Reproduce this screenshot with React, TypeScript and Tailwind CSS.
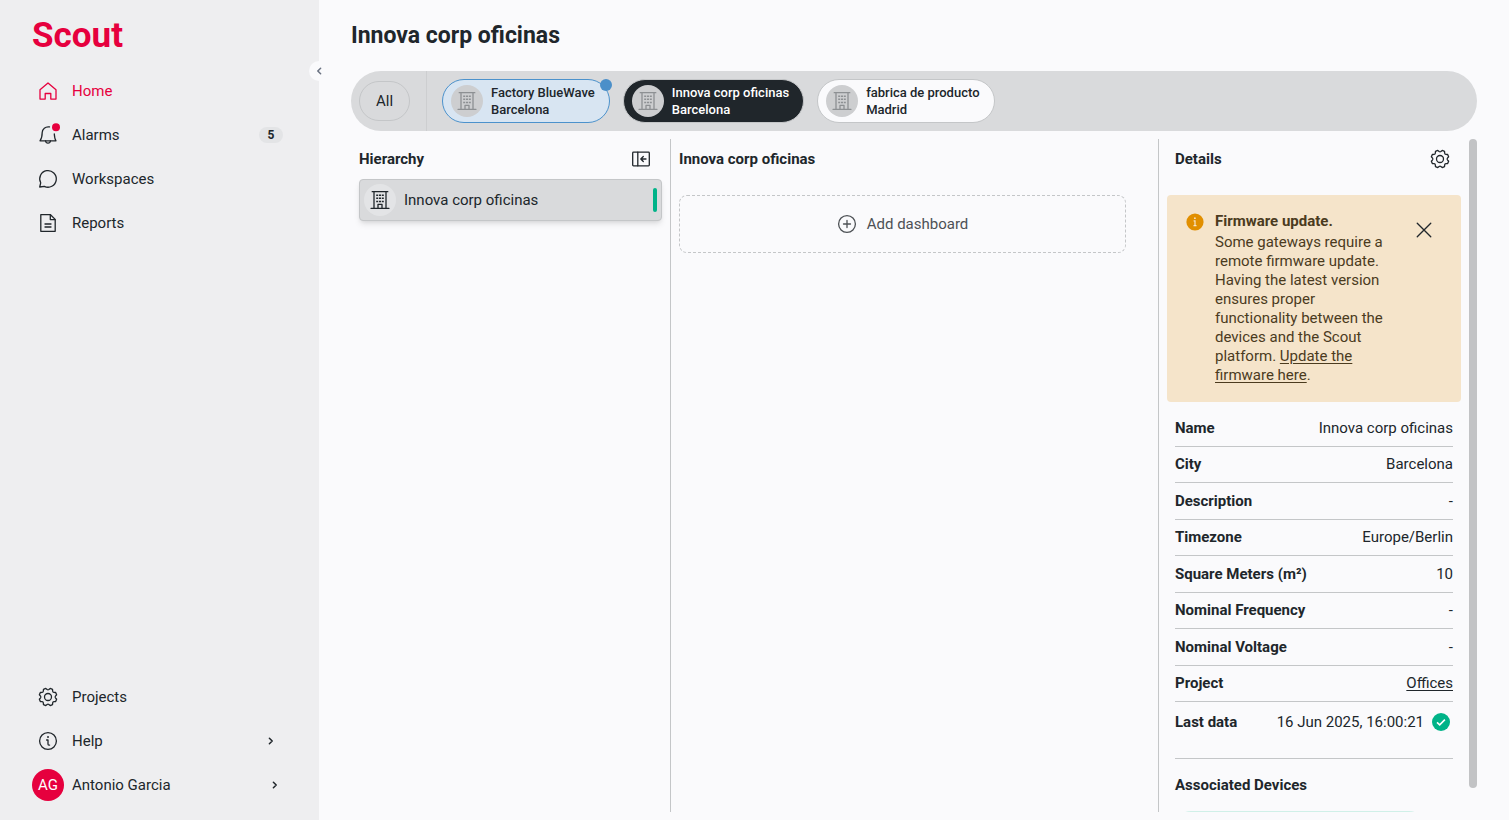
import { useState } from "react";
import type { ReactNode } from "react";
import clsx from "clsx";

type IconProps = { className?: string };

function Icon({ className, children }: IconProps & { children: ReactNode }) {
  return (
    <svg
      viewBox="0 0 20 20"
      fill="none"
      stroke="currentColor"
      strokeWidth="1.3"
      strokeLinecap="round"
      strokeLinejoin="round"
      aria-hidden="true"
      className={clsx("shrink-0 overflow-visible", className ?? "size-5")}
    >
      {children}
    </svg>
  );
}

// Eight teeth around the centre, with a notch on each axis
const gearPath = (() => {
  const point = (radius: number, degrees: number) => {
    const angle = (degrees * Math.PI) / 180;
    return `${(10 + radius * Math.cos(angle)).toFixed(2)} ${(10 + radius * Math.sin(angle)).toFixed(2)}`;
  };
  const parts: string[] = [];
  for (let i = 0; i < 8; i++) {
    const a = 22.5 + i * 45;
    parts.push(`${i ? "L" : "M"}${point(8.9, a - 8)}`);
    parts.push(`L${point(8.9, a + 8)}`);
    parts.push(`L${point(7.5, a + 16)}`);
    parts.push(`Q${point(6.8, a + 22.5)} ${point(7.5, a + 29)}`);
  }
  return parts.join(" ") + "Z";
})();

function GearIcon() {
  return (
    <Icon>
      <path d={gearPath} />
      <circle cx="10" cy="10" r="3.5" />
    </Icon>
  );
}

function HomeIcon() {
  return (
    <Icon>
      <path d="M2 8.700 10 1.900l8 6.800v9.400h-5.200v-5.600H7.200v5.600H2z" />
    </Icon>
  );
}

function BellIcon() {
  return (
    <Icon>
      <path d="M11.500 1.900C7.300 1.200 4.300 4 4.200 7.600c0 4.200-.6 6.200-2.200 8.200h16c-1-1.300-1.500-3.200-1.700-6.800" />
      <path d="M7.600 16c.2 1.400 1.100 2.200 2.400 2.200s2.200-.8 2.400-2.200" />
      <circle cx="18" cy="2.200" r="4" fill="#e6003e" stroke="none" />
    </Icon>
  );
}

function ChatIcon() {
  return (
    <Icon>
      <path d="M1.700 18l1-4.200A8.300 8.300 0 1 1 6.300 17.300z" />
    </Icon>
  );
}

function ReportIcon() {
  return (
    <Icon>
      <path d="M2.800 1.700h9.700L17.200 6.400v11.900H2.800z" />
      <path d="M12.300 1.900v4.700h4.700M7 11h6M7 14h6" />
    </Icon>
  );
}

function InfoIcon() {
  return (
    <Icon>
      <circle cx="10" cy="10" r="8.400" />
      <path d="M8.600 9H10v4.200q0 .9 1.600.9" />
      <circle cx="9.900" cy="6" r=".5" fill="currentColor" strokeWidth=".8" />
    </Icon>
  );
}

function CollapseIcon() {
  return (
    <Icon>
      <rect x="1.700" y="3.200" width="16.600" height="13.600" rx=".8" />
      <path d="M6.800 3.200v13.600M15 10h-5m2.300-2.500L9.800 10l2.500 2.500" />
    </Icon>
  );
}

function BuildingIcon() {
  return (
    <Icon>
      <path d="M1 18.300h18M2.200 1.700h15.600M4 1.700v16.600M16 1.700v16.600M8 18.300v-4h4v4" />
      <path
        strokeLinecap="butt"
        strokeWidth="1.500"
        d="M6.200 5.200h2m.8 0h2m.8 0h2M6.200 8.300h2m.8 0h2m.8 0h2M6.200 11.400h2m.8 0h2m.8 0h2"
      />
    </Icon>
  );
}

function ChevronIcon() {
  return (
    <Icon className="size-2">
      <path d="m6 3 7 7-7 7" strokeWidth="3.800" />
    </Icon>
  );
}

type NavItemProps = {
  label: string;
  icon: ReactNode;
  active?: boolean;
  trailing?: ReactNode;
};

function NavItem({ label, icon, active, trailing }: NavItemProps) {
  return (
    <li>
      <a
        href="#"
        className={clsx(
          "flex h-11 items-center gap-2",
          active ? "text-[#e6003e]" : "text-[#20262b]"
        )}
      >
        <span className="flex w-8 justify-center">{icon}</span>
        <span className="flex-1">{label}</span>
        {trailing}
      </a>
    </li>
  );
}

const sites = [
  { id: 1, name: "Factory BlueWave", city: "Barcelona", notify: true },
  { id: 2, name: "Innova corp oficinas", city: "Barcelona", notify: false },
  { id: 3, name: "fabrica de producto", city: "Madrid", notify: false },
];

const details = [
  { label: "Name", value: "Innova corp oficinas" },
  { label: "City", value: "Barcelona" },
  { label: "Description", value: "-" },
  { label: "Timezone", value: "Europe/Berlin" },
  { label: "Square Meters (m²)", value: "10" },
  { label: "Nominal Frequency", value: "-" },
  { label: "Nominal Voltage", value: "-" },
  { label: "Project", value: "Offices", link: true },
];

function Sidebar() {
  return (
    <aside className="relative flex w-[319px] shrink-0 flex-col bg-[#eeeef0] pt-3 pb-[13px]">
      <div className="px-8 text-[35px] leading-12 font-bold text-[#e6003e]">Scout</div>

      <button
        type="button"
        aria-label="Collapse menu"
        className="absolute top-[61px] -right-[10px] flex size-5 items-center justify-center rounded-full bg-[#fafafc] text-gray-500"
      >
        <span className="rotate-180">
          <ChevronIcon />
        </span>
      </button>

      <nav className="mt-[9px] flex flex-1 flex-col justify-between px-8">
        <ul>
          <NavItem label="Home" icon={<HomeIcon />} active />
          <NavItem
            label="Alarms"
            icon={<BellIcon />}
            trailing={
              <span className="mr-1 h-4 w-6 rounded-full bg-[#e3e4e6] text-center text-xs leading-4 font-bold">
                5
              </span>
            }
          />
          <NavItem label="Workspaces" icon={<ChatIcon />} />
          <NavItem label="Reports" icon={<ReportIcon />} />
        </ul>
        <ul>
          <NavItem label="Projects" icon={<GearIcon />} />
          <NavItem
            label="Help"
            icon={<InfoIcon />}
            trailing={
              <span className="mr-3">
                <ChevronIcon />
              </span>
            }
          />
          <NavItem
            label="Antonio Garcia"
            icon={
              <span className="flex size-8 items-center justify-center rounded-full bg-[#e6003e] text-white">
                AG
              </span>
            }
            trailing={
              <span className="mr-2">
                <ChevronIcon />
              </span>
            }
          />
        </ul>
      </nav>
    </aside>
  );
}

export default function App() {
  const [selected, setSelected] = useState(2);
  const [showAlert, setShowAlert] = useState(true);

  return (
    <div className="flex h-screen overflow-hidden bg-[#fafafc] font-['Roboto',sans-serif] text-[15px] leading-5 text-[#20262b]">
      <Sidebar />

      <main className="flex min-w-0 flex-1 flex-col px-8 pt-[21px] pb-2">
        <h1 className="text-[23px] leading-[30px] font-bold">Innova corp oficinas</h1>

        {/* Site selector */}
        <div className="mt-5 flex h-15 shrink-0 items-center rounded-full bg-[#d9dadc] pl-2">
          <button
            type="button"
            className="h-10 w-[51px] rounded-full border border-[#c4c6c8]"
          >
            All
          </button>
          <div className="ml-4 flex gap-[13px] self-stretch border-l border-[#cdced0] py-2 pl-[15px]">
            {sites.map((site) => (
              <button
                key={site.id}
                type="button"
                onClick={() => setSelected(site.id)}
                className={clsx(
                  "relative flex h-11 items-center gap-2 rounded-full border pr-[14px] pl-2 text-left text-[13px] leading-[17px] font-medium",
                  site.id === selected
                    ? "border-[#c4c6c8] bg-[#20262b] text-white"
                    : site.notify
                      ? "border-[#4c92cc] bg-[#d8e5f2]"
                      : "border-[#c4c6c8] bg-[#fafafc]"
                )}
              >
                <span className="flex size-8 items-center justify-center rounded-full bg-[#cdced0] text-[#8d9093]">
                  <BuildingIcon />
                </span>
                <span>
                  {site.name}
                  <br />
                  {site.city}
                </span>
                {site.notify && (
                  <span className="absolute -top-px -right-[3px] size-3 rounded-full bg-[#4b8fc9]" />
                )}
              </button>
            ))}
          </div>
        </div>

        <div className="mt-2 flex min-h-0 flex-1">
          {/* Hierarchy */}
          <section className="w-80 shrink-0 border-r border-[#c4c6c8] px-2">
            <div className="flex h-10 items-center justify-between pr-[11px]">
              <h2 className="font-bold">Hierarchy</h2>
              <button type="button" aria-label="Collapse hierarchy">
                <CollapseIcon />
              </button>
            </div>
            <button
              type="button"
              className="flex h-[42px] w-full items-center gap-2 rounded border border-[#c4c6c8] bg-[#d9dadc] px-1 text-left shadow-md"
            >
              <span className="flex size-8 items-center justify-center rounded-full bg-[#e3e4e6]">
                <BuildingIcon />
              </span>
              <span className="flex-1">Innova corp oficinas</span>
              <span className="h-6 w-1 rounded-full bg-[#00b388]" />
            </button>
          </section>

          {/* Dashboards */}
          <section className="min-w-0 flex-1 pr-8 pl-2">
            <h2 className="leading-10 font-bold">Innova corp oficinas</h2>
            <button
              type="button"
              className="mt-4 flex h-[58px] w-full items-center justify-center gap-[10px] rounded-lg border border-dashed border-[#c4c6c8] text-[#4d5155]"
            >
              <Icon>
                <circle cx="10" cy="10" r="8.400" />
                <path d="M10 6.500v7M6.500 10h7" />
              </Icon>
              Add dashboard
            </button>
          </section>

          {/* Details */}
          <section className="flex w-[319px] shrink-0 overflow-hidden border-l border-[#c4c6c8]">
            <div className="min-w-0 flex-1">
              <div className="flex h-10 items-center justify-between pr-[19px] pl-4">
                <h2 className="font-bold">Details</h2>
                <button type="button" aria-label="Settings">
                  <GearIcon />
                </button>
              </div>

              {showAlert && (
                <div className="mx-2 mt-4 flex items-start rounded bg-[#f5e4ca] pt-4 pr-7 pb-[17px] pl-[18px] text-[#4b3b1e]">
                  <svg viewBox="0 0 20 20" className="mt-px size-5 shrink-0" aria-hidden="true">
                    <circle cx="10" cy="10" r="8.600" fill="#e18f00" />
                    <path d="M8.600 8.800H10v4.800m-1.500 0h3" fill="none" stroke="#f5e4ca" strokeWidth="1.200" />
                    <circle cx="9.900" cy="6.200" r=".9" fill="#f5e4ca" />
                  </svg>
                  <div className="ml-[10px] flex-1">
                    <p className="font-bold">Firmware update.</p>
                    <p className="mt-[2px] leading-[19px]">
                      Some gateways require a remote firmware update. Having the latest version
                      ensures proper functionality between the devices and the Scout platform.{" "}
                      <a href="#" className="underline underline-offset-2">
                        Update the firmware here
                      </a>
                      .
                    </p>
                  </div>
                  <button
                    type="button"
                    aria-label="Close"
                    onClick={() => setShowAlert(false)}
                    className="mt-[10px] ml-6 text-[#20262b]"
                  >
                    <Icon className="size-[18px]">
                      <path d="m2.500 2.500 15 15m0-15-15 15" strokeWidth="1.500" />
                    </Icon>
                  </button>
                </div>
              )}

              <div className="mt-2 px-4">
                <dl className="flex h-[292px] flex-col">
                  {details.map((row) => (
                    <div
                      key={row.label}
                      className="flex flex-1 items-center justify-between border-b border-[#c4c6c8]"
                    >
                      <dt className="font-bold">{row.label}</dt>
                      <dd>
                        {row.link ? (
                          <a href="#" className="underline underline-offset-2">
                            {row.value}
                          </a>
                        ) : (
                          row.value
                        )}
                      </dd>
                    </div>
                  ))}
                </dl>
                <dl className="flex h-[57px] items-start justify-between border-b border-[#c4c6c8] pt-[10px]">
                  <dt className="font-bold">Last data</dt>
                  <dd className="flex items-center gap-[7px] pr-[2px]">
                    16 Jun 2025, 16:00:21
                    <svg viewBox="0 0 20 20" className="size-5" aria-hidden="true">
                      <circle cx="10" cy="10" r="9" fill="#00b388" />
                      <path d="m6 10.300 2.700 2.500 5.200-5.200" fill="none" stroke="#fff" strokeWidth="1.600" />
                    </svg>
                  </dd>
                </dl>
                <h3 className="mt-4 font-bold">Associated Devices</h3>
                <div className="mt-4 mr-7 h-20 rounded-2xl bg-[#d0f0e8]" />
              </div>
            </div>
            <div className="mb-6 w-2 rounded-full bg-[#c2c3c5]" />
          </section>
        </div>
      </main>
    </div>
  );
}
